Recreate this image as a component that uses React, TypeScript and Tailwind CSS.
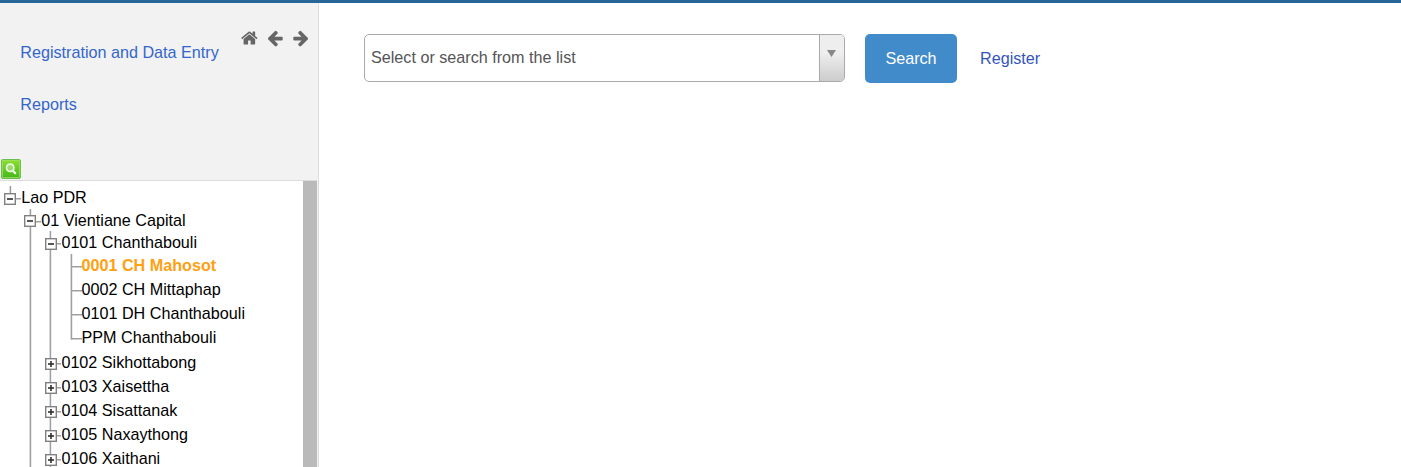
import React from "react";

type Kind = "open" | "closed" | "leaf" | "last";

interface Node {
  label: string;
  depth: number;
  kind: Kind;
  height: string;
  selected?: boolean;
}

const nodes: Node[] = [
  { label: "Lao PDR", depth: 0, kind: "open", height: "h-[23px]" },
  { label: "01 Vientiane Capital", depth: 1, kind: "open", height: "h-[22px]" },
  { label: "0101 Chanthabouli", depth: 2, kind: "open", height: "h-[23px]" },
  { label: "0001 CH Mahosot", depth: 3, kind: "leaf", height: "h-6", selected: true },
  { label: "0002 CH Mittaphap", depth: 3, kind: "leaf", height: "h-6" },
  { label: "0101 DH Chanthabouli", depth: 3, kind: "leaf", height: "h-6" },
  { label: "PPM Chanthabouli", depth: 3, kind: "last", height: "h-[25px]" },
  { label: "0102 Sikhottabong", depth: 2, kind: "closed", height: "h-6" },
  { label: "0103 Xaisettha", depth: 2, kind: "closed", height: "h-6" },
  { label: "0104 Sisattanak", depth: 2, kind: "closed", height: "h-6" },
  { label: "0105 Naxaythong", depth: 2, kind: "closed", height: "h-6" },
  { label: "0106 Xaithani", depth: 2, kind: "closed", height: "h-6" },
];

const stems = [10, 30, 50, 71];

/* Connector lines and the expand/collapse box in front of a label */
function Connector({ depth, kind }: { depth: number; kind: Kind }) {
  const width = 21.2 + depth * 20.1;
  const x = stems[depth];
  const isBox = kind === "open" || kind === "closed";
  const boxX = depth === 2 ? 45 : 4 + depth * 20;
  const boxY = depth === 1 ? 6 : 7;
  const endY = kind === "last" ? 13.5 : 30;
  return (
    <svg width={width} height="100%" className="shrink-0">
      <g fill="#a0a0a0">
        {depth > 1 && <rect x={29.6} y={0} width={1.6} height={30} />}
        {depth > 2 && <rect x={49.6} y={0} width={1.6} height={30} />}
        <rect x={x - 0.4} y={0} width={1.6} height={depth < 2 ? boxY : endY} />
        {depth === 1 && <rect x={29.6} y={18} width={1.6} height={10} />}
        <rect x={isBox ? boxX + 12 : x} y={12} width={width} height={1.5} />
      </g>
      {isBox && (
        <g>
          <rect x={boxX} y={boxY} width={12} height={12} fill="#808080" />
          <rect x={boxX + 1.4} y={boxY + 1.4} width={9.2} height={9.2} fill="#fff" />
          <rect x={boxX + 3} y={boxY + 5.2} width={6} height={1.6} fill="#303030" />
          {kind === "closed" && (
            <rect x={boxX + 5.2} y={boxY + 3} width={1.6} height={6} fill="#303030" />
          )}
        </g>
      )}
    </svg>
  );
}

const homePath =
  "M1408 992v480q0 26-19 45t-45 19h-384v-384h-256v384h-384q-26 0-45-19t-19-45v-480q0-1 .5-3t.5-3l575-474 575 474q1 2 1 6zm223-69l-62 74q-8 9-21 11h-3q-13 0-21-7l-692-577-692 577q-12 8-24 7-13-2-21-11l-62-74q-8-10-7-23.5t11-21.5l719-599q32-26 76-26t76 26l244 204v-195q0-14 9-23t23-9h192q14 0 23 9t9 23v408l219 182q10 8 11 21.5t-7 23.5z";
const leftPath =
  "M1664 896v128q0 53-32.5 90.5t-84.5 37.5h-704l293 294q38 36 38 90t-38 90l-75 76q-37 37-90 37-52 0-91-37l-651-652q-37-37-37-90 0-52 37-91l651-650q38-38 91-38 52 0 90 38l75 74q38 38 38 91t-38 91l-293 293h704q52 0 84.5 37.5t32.5 90.5z";
const rightPath =
  "M1600 960q0 54-37 91l-651 651q-39 37-91 37-51 0-90-37l-75-75q-38-38-38-91t38-91l293-293h-704q-52 0-84.5-37.5t-32.5-90.5v-128q0-53 32.5-90.5t84.5-37.5h704l-293-294q-38-36-38-90t38-90l75-75q38-38 90-38 53 0 91 38l651 651q37 35 37 90z";

function NavIcon({ d }: { d: string }) {
  return (
    <svg viewBox="0 0 1792 1792" className="size-[18px]" fill="#666">
      <path d={d} />
    </svg>
  );
}

export default function App() {
  return (
    <div className="flex h-[467px] flex-col overflow-hidden border-t-3 border-[#276696] bg-white font-['Liberation_Sans',sans-serif] text-[16.16px] leading-6">
      <div className="flex min-h-0 flex-1">
        <aside className="flex w-[319px] shrink-0 flex-col border-r border-[#dcdcdc] bg-[#f2f2f2]">
          <div className="flex h-[155px] shrink-0 justify-between">
            <nav className="flex flex-col gap-7 pt-[37px] pl-[20.3px] text-[#3366cc]">
              <a>Registration and Data Entry</a>
              <a>Reports</a>
            </nav>
            <div className="flex gap-[7.5px] pt-[25.5px] pr-2">
              <NavIcon d={homePath} />
              <div className="-ml-px pr-px">
                <NavIcon d={leftPath} />
              </div>
              <NavIcon d={rightPath} />
            </div>
          </div>
          <div className="h-[22px] shrink-0 pt-px pl-px">
            <svg width="20" height="20" viewBox="0 0 20 20">
              <defs>
                <linearGradient id="green" x1="0" y1="0" x2="0" y2="1">
                  <stop offset="0" stopColor="#8ee032" />
                  <stop offset="1" stopColor="#43b51e" />
                </linearGradient>
              </defs>
              <rect x="0.5" y="0.5" width="19" height="19" rx="1.5" fill="url(#green)" stroke="#6cbf4c" />
              <rect x="1.5" y="1.5" width="17" height="17" rx="0.5" fill="none" stroke="#a2e468" strokeOpacity="0.7" />
              <circle cx="9.2" cy="8.8" r="3.7" fill="#9bdb70" stroke="#eefbe0" strokeWidth="1.7" />
              <path d="M12.2 12l2 2.2" stroke="#eefbe0" strokeWidth="2.2" strokeLinecap="round" />
            </svg>
          </div>
          <div className="mr-px flex min-h-0 flex-1 border-t border-[#dcdcdc] bg-white">
            <div className="min-w-0 flex-1 overflow-hidden pt-[5px] text-black">
              {nodes.map((n) => (
                <div key={n.label} className={`flex leading-[22px] ${n.height}`}>
                  <Connector depth={n.depth} kind={n.kind} />
                  <span className={n.selected ? "font-bold text-[#ffa012]" : ""}>{n.label}</span>
                </div>
              ))}
            </div>
            <div className="w-[14px] bg-[#bababa]" />
          </div>
        </aside>
        <main className="flex flex-1 items-start pt-[31px] pl-[45px]">
          <div className="flex h-12 w-[481px] overflow-hidden rounded-[5px] border border-[#aaa] bg-white">
            <span className="flex-1 pt-2.5 pl-1.5 text-[#555]">Select or search from the list</span>
            <div className="flex w-[25px] justify-center border-l border-[#aaa] bg-linear-to-b from-[#eee] from-40% to-[#ccc] pt-[15px] pr-px">
              <svg width="9" height="7" viewBox="0 0 9 7">
                <path d="M0 0h9L4.5 7z" fill="#888" />
              </svg>
            </div>
          </div>
          <button className="ml-5 h-[49px] w-[92px] rounded-[5px] bg-[#428bca] pb-0.5 text-white">Search</button>
          <a className="mt-[12px] ml-[23px] text-[#3355bb]">Register</a>
        </main>
      </div>
    </div>
  );
}
